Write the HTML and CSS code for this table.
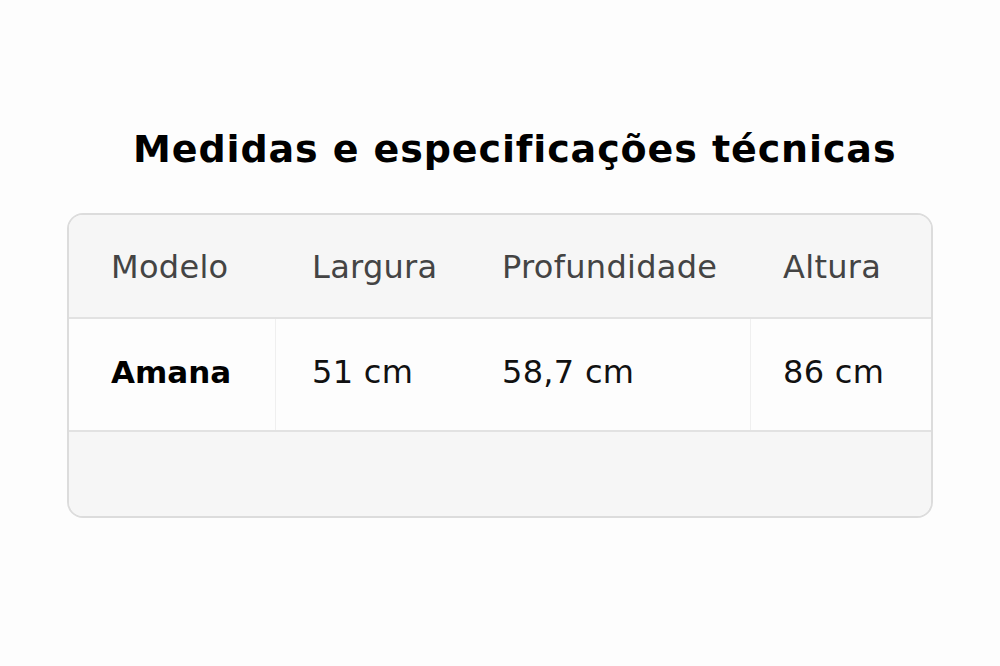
FILE: index.html
```html
<!DOCTYPE html>
<html lang="pt">
<head>
<meta charset="utf-8">
<link rel="stylesheet" href="styles.css">
</head>
<body>
<main class="page">
  <h1 class="title">Medidas e especificações técnicas</h1>
  <div class="card">
    <div class="row head">
      <div class="cell c1">Modelo</div>
      <div class="cell c2">Largura</div>
      <div class="cell c3">Profundidade</div>
      <div class="cell c4">Altura</div>
    </div>
    <div class="row body">
      <div class="cell c1 strong sep">Amana</div>
      <div class="cell c2">51 cm</div>
      <div class="cell c3 sep">58,7 cm</div>
      <div class="cell c4">86 cm</div>
    </div>
    <div class="foot"></div>
  </div>
</main>
</body>
</html>
```

FILE: styles.css
```css
html, body {
  margin: 0;
  padding: 0;
  background: #fdfdfd;
}
body {
  font-family: "DejaVu Sans", Verdana, sans-serif;
  width: 1000px;
  height: 666px;
  overflow: hidden;
}
.page {
  padding: 125px 67px 0 67px;
}
.title {
  margin: 0 0 40px 0;
  padding-left: 66px;
  font-size: 38px;
  font-weight: bold;
  color: #000;
  line-height: 48px;
  letter-spacing: 0.9px;
}
.card {
  border: 2px solid #dcdcdc;
  border-radius: 16px;
  overflow: hidden;
  background: #fdfdfd;
}
.row {
  display: grid;
  grid-template-columns: 207px 191px 284px 1fr;
}
.head {
  background: #f6f6f6;
  height: 102px;
  border-bottom: 2px solid #e2e2e2;
  align-items: center;
}
.head .cell {
  font-size: 32px;
  color: #444;
  padding-top: 2px;
  letter-spacing: 0.3px;
}
.body {
  height: 111px;
  border-bottom: 2px solid #e2e2e2;
  background: #fdfdfd;
}
.body .cell {
  font-size: 32px;
  color: #111;
  display: flex;
  align-items: center;
  padding-bottom: 6px;
  letter-spacing: 0.3px;
}
.cell.c1 { padding-left: 42px; }
.cell.c2 { padding-left: 36px; }
.cell.c3 { padding-left: 35px; }
.cell.c4 { padding-left: 32px; }
.cell.sep { border-right: 1px solid #efefef; }
.cell.strong { font-weight: bold; color: #000; font-size: 31px; letter-spacing: 0; }
.foot {
  height: 84px;
  background: #f6f6f6;
}
```
